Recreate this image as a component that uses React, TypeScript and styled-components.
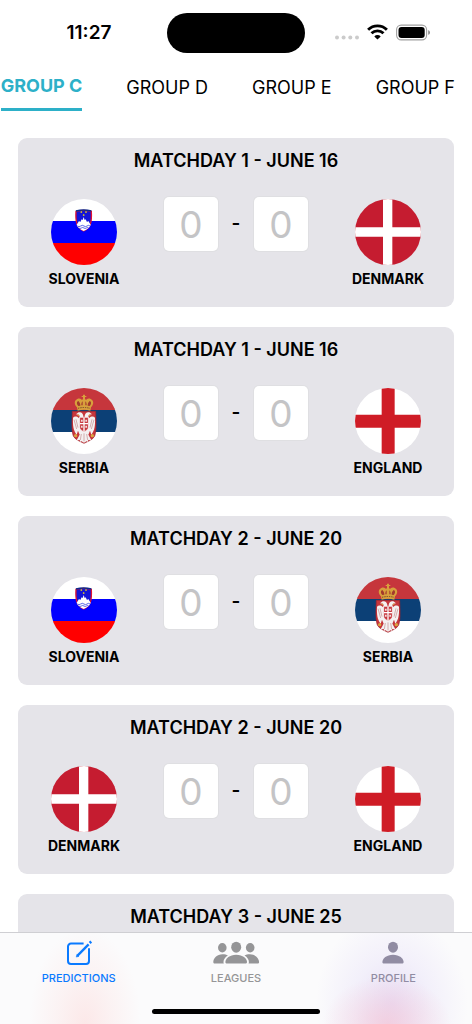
import React from "react";
import styled, { createGlobalStyle, css } from "styled-components";

const GlobalStyle = createGlobalStyle`
  *, *::before, *::after { box-sizing: border-box; }
  body {
    margin: 0;
    background: #ffffff;
    color: #000000;
    font-family: Inter, "Liberation Sans", sans-serif;
  }
  button, input { font: inherit; color: inherit; }
`;

const Screen = styled.div`
  display: flex;
  flex-direction: column;
  height: 100vh;
  background: #ffffff;
`;

const StatusBar = styled.header`
  display: grid;
  grid-template-columns: 1fr auto 1fr;
  align-items: center;
  justify-items: center;
  flex: none;
  height: 65px;
  padding: 1px 11px 0;
`;

const Clock = styled.time`
  font-size: 19px;
  line-height: 24px;
  font-weight: 600;
`;

const Island = styled.div`
  width: 138px;
  height: 40px;
  border-radius: 20px;
  background: #000000;
`;

const Indicators = styled.div`
  display: flex;
  align-items: center;
  gap: 8px;
`;

const GroupTabs = styled.nav`
  display: flex;
  flex: none;
  justify-content: flex-end;
  align-items: flex-start;
  gap: 44px;
  height: 47px;
  padding-right: 17px;
  overflow: hidden;
`;

const GroupTab = styled.button<{ $active?: boolean }>`
  flex: none;
  padding: 11px 0 0;
  border: 0;
  background: none;
  font-size: 18px;
  line-height: 24px;
  white-space: nowrap;
  ${({ $active }) =>
    $active &&
    css`
      padding: 9px 0 10px;
      border-bottom: 3px solid #2db0c8;
      color: #2db0c8;
      font-weight: 700;
    `}
`;

const MatchList = styled.main`
  display: flex;
  flex: 1;
  flex-direction: column;
  gap: 20px;
  min-height: 0;
  padding: 26px 18px 0;
  overflow-y: auto;
  scrollbar-width: none;
`;

const MatchCard = styled.section`
  flex: none;
  padding: 11px 20px 18px;
  border-radius: 9px;
  background: #e5e4e9;
`;

const MatchTitle = styled.h2`
  margin: 0 0 24px;
  font-size: 18px;
  line-height: 24px;
  font-weight: 600;
  text-align: center;
`;

const MatchBody = styled.div`
  display: flex;
  justify-content: space-between;
  align-items: flex-start;
`;

const Team = styled.div`
  display: flex;
  flex-direction: column;
  align-items: center;
  gap: 4px;
  width: 92px;
  padding-top: 2px;
`;

const FlagSvg = styled.svg`
  display: block;
  width: 66px;
  height: 66px;
  border-radius: 50%;
`;

const TeamName = styled.span`
  font-size: 14px;
  line-height: 20px;
  font-weight: 700;
`;

const Score = styled.div`
  display: flex;
  align-items: center;
`;

const ScoreInput = styled.input`
  width: 54px;
  height: 54px;
  padding: 0;
  border: 0;
  border-radius: 5px;
  background: #ffffff;
  box-shadow: 0 0 0 1px #dfdfe2;
  font-size: 37px;
  text-align: center;
  outline: none;
  &::placeholder {
    color: #c4c4c6;
    opacity: 1;
  }
`;

const Dash = styled.span`
  width: 36px;
  font-size: 19px;
  line-height: 24px;
  font-weight: 600;
  text-align: center;
`;

const BottomBar = styled.footer`
  flex: none;
  border-top: 1px solid #cfcfd3;
  background:
    radial-gradient(ellipse 64px 48px at 82% 100%, rgba(245, 195, 212, 0.65), rgba(245, 195, 212, 0.3) 50%, transparent),
    radial-gradient(ellipse 76px 92px at 83% 78%, rgba(225, 213, 243, 0.75), rgba(232, 226, 248, 0.45) 50%, transparent),
    radial-gradient(ellipse 56px 96px at 18% 100%, rgba(252, 222, 222, 0.65), rgba(252, 226, 226, 0.35) 50%, transparent),
    #fbfbfc;
`;

const BottomNav = styled.nav`
  display: grid;
  grid-template-columns: repeat(3, 1fr);
`;

const BottomTab = styled.button<{ $color: string }>`
  display: flex;
  flex-direction: column;
  align-items: center;
  gap: 3px;
  padding: 6px 0 0;
  border: 0;
  background: none;
  color: ${({ $color }) => $color};
  font-size: 11px;
  line-height: 16px;
  font-weight: 500;
`;

const HomeIndicator = styled.div`
  width: 168px;
  height: 5px;
  margin: 23px auto 10px;
  border-radius: 3px;
  background: #000000;
`;

function StatusIcons() {
  return (
    <Indicators>
      <svg width="24" height="22" viewBox="0 1 24 22" fill="#cbcbcb" aria-hidden="true">
        <circle cx="2" cy="16.600" r="2" />
        <circle cx="8.600" cy="16.600" r="2" />
        <circle cx="15.300" cy="16.600" r="2" />
        <circle cx="22" cy="16.600" r="2" />
      </svg>
      <svg width="21" height="22" viewBox="0 1 21 22" fill="none" stroke="#000000" strokeWidth="2.900" aria-label="Wi-Fi">
        <path d="M1.100 8.700a13.400 13.400 0 0 1 18.800 0" />
        <path d="M4.500 12.300a8.600 8.600 0 0 1 12 0" />
        <path d="M10.500 18.600 7.300 15.400a4.600 4.600 0 0 1 6.400 0Z" fill="#000000" stroke="none" />
      </svg>
      <svg width="35" height="22" viewBox="0 1 35 22" aria-label="Battery">
        <rect x="0.600" y="4.100" width="30" height="14.800" rx="4.600" fill="none" stroke="#a0a0a0" strokeWidth="1.100" />
        <rect x="2.500" y="6" width="26.200" height="11" rx="3" fill="#000000" />
        <path d="M32.200 9.200c2.400.7 2.400 3.900 0 4.600Z" fill="#8e8e8e" />
      </svg>
    </Indicators>
  );
}

function Slovenia() {
  return (
    <FlagSvg viewBox="0 0 198 198" aria-hidden="true">
      <path fill="#ffffff" d="M0 0h198v66H0z" />
      <path fill="#0000ff" d="M0 66h198v66H0z" />
      <path fill="#ff0000" d="M0 132h198v66H0z" />
      <path
        d="M75 37q23-6 46 0c1 22 2 49-23 59-25-10-24-37-23-59Z"
        fill="#1414d8"
        stroke="#e01030"
        strokeWidth="4"
      />
      <path d="M75 36q23-6 46 0" fill="none" stroke="#0b2a8c" strokeWidth="4" />
      <path
        d="M77 77l7-11 4 3 4-8 3 2 3-9 3 9 3-2 4 8 4-3 7 11c-2 8-10 14-21 19-11-5-19-11-21-19Z"
        fill="#ffffff"
      />
      <path d="M79 81q5 4 10 0t10 0 9 0 9 0M83 87q4 3 8 0t8 0 7 0 7 0" fill="none" stroke="#2030e0" strokeWidth="2.200" />
      <g fill="#ffe600">
        <circle cx="91" cy="39" r="2.600" />
        <circle cx="105" cy="39" r="2.600" />
        <circle cx="98" cy="48" r="2.600" />
      </g>
    </FlagSvg>
  );
}

function Denmark() {
  return (
    <FlagSvg viewBox="0 0 198 198" aria-hidden="true">
      <path fill="#c51c30" d="M0 0h198v198H0z" />
      <path fill="#ffffff" d="M84 0h28v198H84zM0 85h198v28H0z" />
    </FlagSvg>
  );
}

function England() {
  return (
    <FlagSvg viewBox="0 0 198 198" aria-hidden="true">
      <path fill="#ffffff" d="M0 0h198v198H0z" />
      <path fill="#cf1c26" d="M80 0h39v198H80zM0 80h198v39H0z" />
    </FlagSvg>
  );
}

function Serbia() {
  return (
    <FlagSvg viewBox="0 0 198 198" aria-hidden="true">
      <path fill="#c6363c" d="M0 0h198v66H0z" />
      <path fill="#0c4076" d="M0 66h198v66H0z" />
      <path fill="#ffffff" d="M0 132h198v66H0z" />
      <path
        d="M64 70h70c1 30 3 57-3 74-5 11-20 16-32 22-12-6-27-11-32-22-6-17-4-44-3-74Z"
        fill="#c6363c"
        stroke="#a3242c"
        strokeWidth="2"
      />
      <g fill="#f4f1f1">
        <path d="M97 84c-1-9-7-13-14-11l-8 6 9 1c3 4 2 8-1 10-5-5-12-6-17-1-1 22 1 38 11 51l4-12 5 12-10 18 10-3 3 8 8-16Z" />
        <path d="M101 84c1-9 7-13 14-11l8 6-9 1c-3 4-2 8 1 10 5-5 12-6 17-1 1 22-1 38-11 51l-4-12-5 12 10 18-10-3-3 8-8-16Z" />
        <path d="M90 126h18l6 29-15 9-15-9Z" />
      </g>
      <path
        d="M69 95l8 28M75 94l6 25M129 95l-8 28M123 94l-6 25M91 138l-3 18M107 138l3 18M99 136v24"
        fill="none"
        stroke="#c28b8d"
        strokeWidth="2"
      />
      <path d="M86 88h26v29c0 8-6 11-13 14-7-3-13-6-13-14Z" fill="#c6363c" stroke="#ffffff" strokeWidth="2" />
      <path d="M99 89v40M87 107h24" stroke="#ffffff" strokeWidth="4" />
      <path d="M90 95h5v6h-5zM103 95h5v6h-5zM90 113h5v6h-5zM103 113h5v6h-5z" fill="#f3dede" />
      <g fill="#d9a441">
        <circle cx="74" cy="143" r="5" />
        <circle cx="124" cy="143" r="5" />
        <circle cx="82" cy="82" r="2.500" />
        <circle cx="116" cy="82" r="2.500" />
      </g>
      <path
        d="M78 58c-9-8-9-21 1-25 7-3 12 0 14 4l3-5v-5h-4v-3h4v-4h6v4h4v3h-4v5l3 5c2-4 7-7 14-4 10 4 10 17 1 25l-2 10q-19-5-38 0Z"
        fill="#d8a03c"
      />
      <path
        d="M82 54c-6-6-5-13 0-15 4 3 6 9 6 14ZM116 54c6-6 5-13 0-15-4 3-6 9-6 14ZM91 52c0-6 1-10 4-12v12ZM107 52c0-6-1-10-4-12v12Z"
        fill="#a33a2c"
      />
      <path d="M81 61q18-5 36 0" fill="none" stroke="#74452a" strokeWidth="3" strokeDasharray="4 3" />
    </FlagSvg>
  );
}

const flags = { SLOVENIA: Slovenia, DENMARK: Denmark, ENGLAND: England, SERBIA: Serbia };
type TeamId = keyof typeof flags;
type Fixture = { title: string; teams?: [TeamId, TeamId] };

const fixtures: Fixture[] = [
  { title: "MATCHDAY 1 - JUNE 16", teams: ["SLOVENIA", "DENMARK"] },
  { title: "MATCHDAY 1 - JUNE 16", teams: ["SERBIA", "ENGLAND"] },
  { title: "MATCHDAY 2 - JUNE 20", teams: ["SLOVENIA", "SERBIA"] },
  { title: "MATCHDAY 2 - JUNE 20", teams: ["DENMARK", "ENGLAND"] },
  { title: "MATCHDAY 3 - JUNE 25" },
];

function TeamBadge({ team }: { team: TeamId }) {
  const Flag = flags[team];
  return (
    <Team>
      <Flag />
      <TeamName>{team}</TeamName>
    </Team>
  );
}

function Match({ title, teams }: Fixture) {
  return (
    <MatchCard>
      <MatchTitle>{title}</MatchTitle>
      {teams && (
        <MatchBody>
          <TeamBadge team={teams[0]} />
          <Score>
            <ScoreInput inputMode="numeric" placeholder="0" aria-label={`${teams[0]} goals`} />
            <Dash>-</Dash>
            <ScoreInput inputMode="numeric" placeholder="0" aria-label={`${teams[1]} goals`} />
          </Score>
          <TeamBadge team={teams[1]} />
        </MatchBody>
      )}
    </MatchCard>
  );
}

function PredictionsIcon() {
  return (
    <svg width="28" height="28" viewBox="0 0 28 28" fill="none" stroke="currentColor" aria-hidden="true">
      <path d="M18.600 4.600H6a3 3 0 0 0-3 3v14.500a3 3 0 0 0 3 3h15a3 3 0 0 0 3-3V9.300" strokeWidth="2" />
      <path d="M12.300 16.900 23.600 5.400" strokeWidth="2.300" />
      <path d="m11.200 18.100.7-2.600 1.900 1.900Z" fill="currentColor" strokeWidth="0.500" />
      <path d="m24.700 4 1.500-1.500" strokeWidth="2.500" />
    </svg>
  );
}

function LeaguesIcon() {
  return (
    <svg width="48" height="28" viewBox="0 0 48 28" fill="currentColor" aria-hidden="true">
      <ellipse cx="10.300" cy="8.700" rx="4.300" ry="4.700" />
      <ellipse cx="38.200" cy="8.700" rx="4.300" ry="4.700" />
      <ellipse cx="24.200" cy="8.200" rx="5" ry="5.500" />
      <path d="M24.200 15.700c6.600 0 10.800 3.900 10.800 7.300 0 1.100-.7 1.600-1.800 1.600h-18c-1.100 0-1.800-.5-1.800-1.600 0-3.400 4.200-7.300 10.800-7.300Z" />
      <path d="M10.600 15.300c2.100 0 3.900.4 5.300 1.200-2.700 1.600-4.400 4-4.400 6.400 0 .7.100 1.200.4 1.700H3c-1.100 0-1.700-.5-1.700-1.500 0-3.700 3.600-7.800 9.300-7.800Z" />
      <path d="M37.800 15.300c-2.100 0-3.900.4-5.300 1.200 2.700 1.600 4.400 4 4.400 6.400 0 .7-.1 1.200-.4 1.700h8.900c1.100 0 1.700-.5 1.700-1.500 0-3.700-3.600-7.800-9.300-7.800Z" />
    </svg>
  );
}

function ProfileIcon() {
  return (
    <svg width="28" height="28" viewBox="0 0 28 28" fill="currentColor" aria-hidden="true">
      <ellipse cx="14" cy="8.200" rx="5" ry="5.500" />
      <path d="M14 15.700c6.500 0 10.600 3.900 10.600 7.300 0 1.100-.7 1.600-1.800 1.600H5.200c-1.100 0-1.800-.5-1.800-1.600 0-3.400 4.100-7.300 10.600-7.300Z" />
    </svg>
  );
}

export default function App() {
  return (
    <>
      <GlobalStyle />
      <Screen>
        <StatusBar>
          <Clock>11:27</Clock>
          <Island />
          <StatusIcons />
        </StatusBar>
        <GroupTabs>
          <GroupTab $active>GROUP C</GroupTab>
          <GroupTab>GROUP D</GroupTab>
          <GroupTab>GROUP E</GroupTab>
          <GroupTab>GROUP F</GroupTab>
        </GroupTabs>
        <MatchList>
          {fixtures.map((fixture, index) => (
            <Match key={index} {...fixture} />
          ))}
        </MatchList>
        <BottomBar>
          <BottomNav>
            <BottomTab $color="#0a7aff">
              <PredictionsIcon />
              PREDICTIONS
            </BottomTab>
            <BottomTab $color="#959597">
              <LeaguesIcon />
              LEAGUES
            </BottomTab>
            <BottomTab $color="#918ca3">
              <ProfileIcon />
              PROFILE
            </BottomTab>
          </BottomNav>
          <HomeIndicator />
        </BottomBar>
      </Screen>
    </>
  );
}
